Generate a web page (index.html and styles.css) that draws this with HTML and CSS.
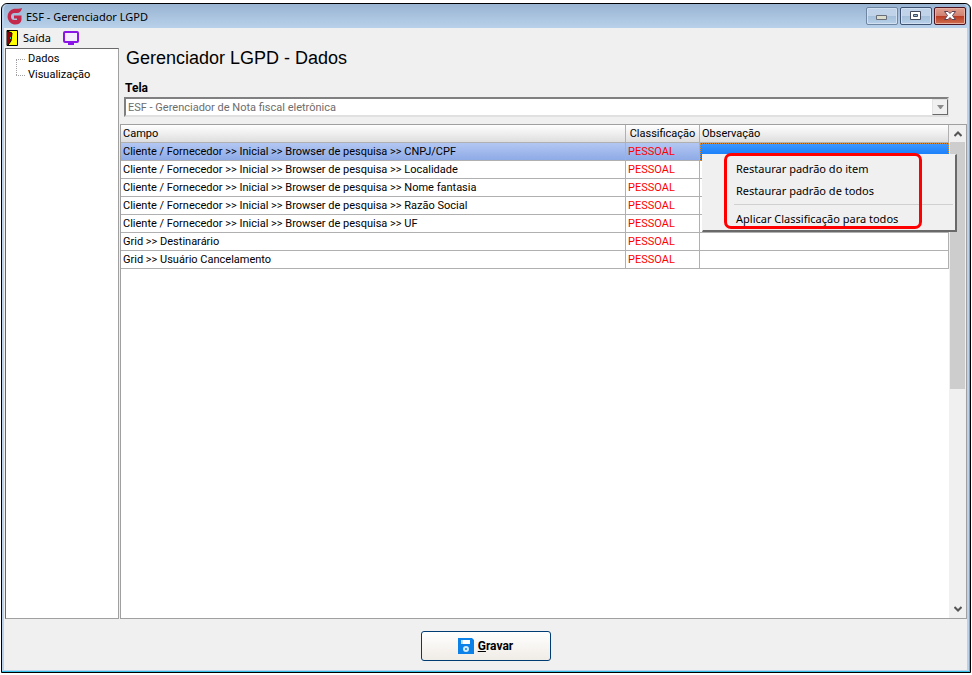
FILE: index.html
```
<!doctype html>
<html lang="pt-br">
  <head>
    <meta charset="utf-8">
    <meta name="viewport" content="width=device-width">
    <title>ESF - Gerenciador LGPD</title>
    <link rel="stylesheet" href="styles.css">
  </head>
  <body>
    <div class="window">
      <header class="titlebar">
        <svg class="logo" viewBox="0 0 17 17" width="17" height="17" aria-hidden="true">
          <path d="M16 0 Q15 5 11 5 H8.500 A3.500 3.500 0 0 0 8.500 12 H11 V10.500 H8 V7.500 H15.500 V12 Q14.500 16.500 9 16.500 H8 A8 8 0 0 1 8 .8 H12 Q14.500 .8 16 0 Z" fill="#c4284a"/>
        </svg>
        <span class="caption">ESF - Gerenciador LGPD</span>
        <button class="winbtn" aria-label="Minimizar">
          <svg viewBox="0 0 12 10" width="12" height="10"><path d="M.5 4.500h10v4H.5z" fill="#dcdccc" stroke="#686e78"/></svg>
        </button>
        <button class="winbtn max" aria-label="Maximizar">
          <svg viewBox="0 0 12 10" width="12" height="10"><path d="M.5 .5h10v8H.5z" fill="#fff" stroke="#444a5c"/><path d="M3.500 3.500h4v2h-4z" fill="#9cb8d8" stroke="#444a5c"/></svg>
        </button>
        <button class="winbtn close" aria-label="Fechar">
          <svg viewBox="0 0 12 10" width="12" height="10"><path d="M.5 .5h3.500l2 2 2-2h3.500L8.500 4.500l3 4H8l-2-2-2 2H.5l3-4z" fill="#fff" stroke="#5a4050"/></svg>
        </button>
      </header>

      <nav class="toolbar">
        <button class="toolbtn">
          <svg viewBox="0 0 12 16" width="12" height="16"><path d="M1 .5h10.500v15H1z" fill="#ff0" stroke="#000"/><path d="M1 1l5 2-1 8-3 4H1z" fill="#900000"/><path d="M1 1l5 2-1 8-3 4" fill="none" stroke="#000"/><path d="M4 7h1v2H4z" fill="#0cc"/></svg>
          Saída
        </button>
        <button class="toolbtn" aria-label="Tela">
          <svg viewBox="0 0 16 14" width="16" height="14"><rect x="1" y="1" width="14" height="10" rx="1" fill="#f4ecfc" stroke="#8a14e6" stroke-width="2"/><path d="M5 13h6" stroke="#8a14e6" stroke-width="2"/></svg>
        </button>
      </nav>

      <main class="content">
        <ul class="tree">
          <li>Dados</li>
          <li>Visualização</li>
        </ul>

        <section class="panel">
          <h1>Gerenciador LGPD - Dados</h1>
          <label for="tela">Tela</label>
          <div class="combo">
            <select id="tela" disabled>
              <option>ESF - Gerenciador de Nota fiscal eletrônica</option>
            </select>
            <span class="arrow"><svg viewBox="0 0 7 4" width="7" height="4"><path d="M0 0h7L4 4H3z" fill="#8c8c8c"/></svg></span>
          </div>

          <div class="grid">
            <div class="gridbody">
              <table>
                <colgroup><col><col class="class-col"><col class="obs-col"></colgroup>
                <thead>
                  <tr><th>Campo</th><th class="center">Classificação</th><th>Observação</th></tr>
                </thead>
                <tbody>
                  <tr class="selected"><td>Cliente / Fornecedor &gt;&gt; Inicial &gt;&gt; Browser de pesquisa &gt;&gt; CNPJ/CPF</td><td class="kind">PESSOAL</td><td class="focus"></td></tr>
                  <tr><td>Cliente / Fornecedor &gt;&gt; Inicial &gt;&gt; Browser de pesquisa &gt;&gt; Localidade</td><td class="kind">PESSOAL</td><td></td></tr>
                  <tr><td>Cliente / Fornecedor &gt;&gt; Inicial &gt;&gt; Browser de pesquisa &gt;&gt; Nome fantasia</td><td class="kind">PESSOAL</td><td></td></tr>
                  <tr><td>Cliente / Fornecedor &gt;&gt; Inicial &gt;&gt; Browser de pesquisa &gt;&gt; Razão Social</td><td class="kind">PESSOAL</td><td></td></tr>
                  <tr><td>Cliente / Fornecedor &gt;&gt; Inicial &gt;&gt; Browser de pesquisa &gt;&gt; UF</td><td class="kind">PESSOAL</td><td></td></tr>
                  <tr><td>Grid &gt;&gt; Destinarário</td><td class="kind">PESSOAL</td><td></td></tr>
                  <tr><td>Grid &gt;&gt; Usuário Cancelamento</td><td class="kind">PESSOAL</td><td></td></tr>
                </tbody>
              </table>
            </div>
            <div class="scrollbar">
              <svg viewBox="0 0 8 6" width="8" height="6"><path d="M.5 5L4 1.500 7.500 5" fill="none" stroke="#555" stroke-width="2"/></svg>
              <div class="track"><div class="thumb"></div></div>
              <svg viewBox="0 0 8 6" width="8" height="6"><path d="M.5 1L4 4.500 7.500 1" fill="none" stroke="#555" stroke-width="2"/></svg>
            </div>

            <div class="menu">
              <button>Restaurar padrão do item</button>
              <button>Restaurar padrão de todos</button>
              <hr>
              <button>Aplicar Classificação para todos</button>
              <div class="marker"></div>
            </div>
          </div>
        </section>
      </main>

      <footer class="actions">
        <button class="save">
          <svg viewBox="0 0 16 16" width="16" height="16"><path d="M0 0h14l2 2v14H0z" fill="#0c82e8"/><path d="M3 2h9v4H3z" fill="#fff"/><path d="M3 2h2v4H3z" fill="#bcdcf8"/><circle cx="8" cy="11" r="2" fill="#0c82e8" stroke="#d4ecff" stroke-width="2"/></svg>
          <span><u>G</u>ravar</span>
        </button>
      </footer>
    </div>
  </body>
</html>
```
FILE: styles.css
```
* { box-sizing: border-box; }
html, body { height: 100%; margin: 0; }
body { padding: 3px 1px 2px 1px; background: #fff; color: #000; font-family: Roboto, "Liberation Sans", Arial, sans-serif; font-size: 11px; line-height: 16px; }
button { font: inherit; color: inherit; }
svg { display: block; flex: none; }

.window { display: flex; flex-direction: column; height: 100%; padding: 0 3px 2px 2px; border: 1px solid #000; border-radius: 6px 6px 0 0; background: #b9d1ea; box-shadow: inset -1px -1px #35c0e8; }

.titlebar { display: flex; align-items: flex-start; height: 24px; padding: 3px 1px 0 0; background: linear-gradient(#98b4d2, #b9d1ea); border-radius: 5px 5px 0 0; }
.logo { margin: 1px 0 0 2px; }
.caption { flex: 1; padding: 2px 0 0 3px; }
.caption, .toolbtn, .menu { font-family: "Noto Sans", "Open Sans", sans-serif; font-size: 11px; }
.winbtn { display: flex; align-items: center; justify-content: center; width: 32px; height: 18px; margin-left: 2px; padding: 0; border: 1px solid #6f86a2; border-radius: 2px; background: linear-gradient(#c0d3e8 50%, #a5bfda 50%, #b8d0e8); box-shadow: inset 0 0 0 1px #d2e1f1; }
.max { border-color: #3c5270; }
.close { border-color: #4c1420; background: linear-gradient(#e0a090, #d08070 50%, #b83820 50%, #d07050); box-shadow: inset 0 0 0 1px #e8b0a0; }

.toolbar { display: flex; height: 20px; padding: 0 2px; background: #f0f0f0; }
.toolbtn { display: flex; align-items: center; gap: 5px; margin-right: 12px; padding: 0; border: 0; background: none; }

.content { display: flex; flex: 1; min-height: 0; gap: 1px; background: #f0f0f0; }
.tree { width: 114px; margin: 0 0 1px 1px; padding: 2px 0 0 10px; border: 1px solid #a0a0a0; border-color: #696969 #a0a0a0 #a0a0a0 #696969; background: #fff; list-style: none; }
.tree li { position: relative; padding-left: 12px; }
.tree li::before { content: ""; position: absolute; left: 0; top: 8px; width: 9px; border-top: 1px dotted #a0a0a0; }
.tree li + li::after { content: ""; position: absolute; left: 0; top: -8px; height: 16px; border-left: 1px dotted #a0a0a0; }

.panel { display: flex; flex: 1; flex-direction: column; min-width: 0; }
h1 { margin: 0 0 13px 6px; font-family: "Liberation Sans", Arial, sans-serif; font-size: 18px; font-weight: normal; line-height: 20px; }
label { margin-left: 5px; font-size: 12px; font-weight: bold; line-height: 14px; }
.combo { position: relative; display: flex; margin: 2px 18px 7px 4px; }
select { flex: 1; height: 20px; padding: 1px 2px 0; border: 2px solid #808080; border-color: #808080 #e0e0e0 #e0e0e0 #808080; border-radius: 0; background: #fff; color: #6d6d6d; font: inherit; opacity: 1; appearance: none; }
.arrow { position: absolute; top: 2px; right: 1px; display: flex; align-items: center; justify-content: center; width: 16px; height: 16px; border: 1px solid #e3e3e3; border-right-color: #696969; border-bottom-color: #696969; background: #f0f0f0; }

.grid { position: relative; display: flex; flex: 1; min-height: 0; margin-bottom: 1px; border: 1px solid #a0a0a0; background: #fff; }
.gridbody { flex: 1; min-width: 0; }
table { width: 100%; table-layout: fixed; border-collapse: separate; border-spacing: 0; }
.class-col { width: 74px; }
.obs-col { width: 249px; }
th, td { height: 18px; padding: 1px 2px 0; border-right: 1px solid #b0b0b0; border-bottom: 1px solid #b0b0b0; line-height: 16px; text-align: left; font-weight: normal; white-space: nowrap; overflow: hidden; }
th { background: linear-gradient(#fff, #dedede); }
.center { text-align: center; }
.kind { color: #f00; }
.selected { background: linear-gradient(#b3c7f2, #8ca9e6); }
.selected .focus { border: 1px dotted #e08a30; background: linear-gradient(#3b96ff, #0a74f5); }
.scrollbar { display: flex; flex-direction: column; align-items: center; width: 17px; padding: 6px 0; background: #f0f0f0; }
.track { flex: 1; width: 15px; margin: 5px 0 6px; }
.thumb { height: 54%; background: #cdcdcd; }

.menu { position: absolute; top: 29px; right: 9px; width: 255px; padding: 3px 2px 0 0; border: 1px solid #f0f0f0; border-right: 2px solid #696969; border-bottom: 2px solid #696969; background: #f0f0f0; }
.menu button { display: block; width: 100%; height: 22px; padding: 0 0 0 33px; border: 0; background: none; text-align: left; }
.menu hr { margin: 2px 0 3px 31px; border: 0; border-top: 1px solid #d0d0d0; }
.marker { position: absolute; top: -2px; left: 21px; width: 198px; height: 76px; border: 3px solid #f00; border-radius: 7px; pointer-events: none; }

.actions { display: flex; justify-content: center; padding: 11px 0 9px; background: #f0f0f0; }
.save { display: flex; align-items: center; justify-content: center; gap: 4px; width: 130px; height: 30px; padding: 0; border: 1px solid #003c74; border-radius: 3px; background: linear-gradient(#fff, #f0ece6); font-size: 12px; font-weight: bold; }
```
